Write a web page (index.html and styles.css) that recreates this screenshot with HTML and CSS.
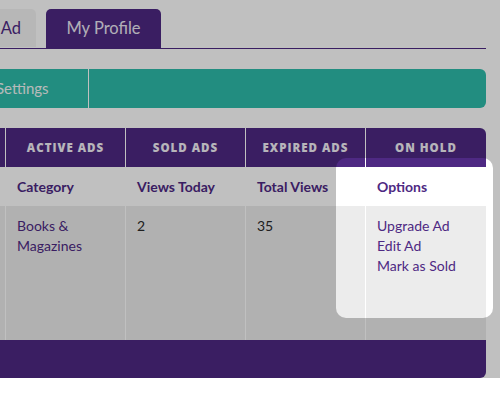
FILE: index.html
```html
<!doctype html>
<html>
  <head>
    <meta charset="utf-8">
    <title>My Profile - Ads</title>
    <link rel="stylesheet" href="styles.css">
  </head>
<body>
<div class="page">
  <div class="tabs">
    <div class="tab tab_ad">Post Ad</div>
    <div class="tab tab_active">My Profile</div>
  </div>

  <div class="subnav">
    <div class="subnav_item">Settings</div>
    <div class="subnav_rest"></div>
  </div>

  <div class="ads">
    <div class="ads_row ads_head">
      <div class="cell">ALL ADS</div>
      <div class="cell">ACTIVE ADS</div>
      <div class="cell">SOLD ADS</div>
      <div class="cell">EXPIRED ADS</div>
      <div class="cell">ON HOLD</div>
    </div>
    <div class="ads_row ads_sub">
      <div class="cell">Ad</div>
      <div class="cell">Category</div>
      <div class="cell">Views Today</div>
      <div class="cell">Total Views</div>
      <div class="cell">Options</div>
    </div>
    <div class="ads_row ads_data">
      <div class="cell"></div>
      <div class="cell">Books &amp;<br>Magazines</div>
      <div class="cell num">2</div>
      <div class="cell num">35</div>
      <div class="cell options">
        <a href="#">Upgrade Ad</a>
        <a href="#">Edit Ad</a>
        <a href="#">Mark as Sold</a>
      </div>
    </div>
    <div class="ads_foot"></div>
  </div>

  <!-- tour highlight over options column -->
  <div class="spotlight"></div>
</div>
</body>
</html>
```

FILE: styles.css
```css
html, body {
  margin: 0px;
  background: #ffffff;
  font-family: 'Lato', 'Open Sans', sans-serif;
  overflow: hidden;
}

.page {
  position: relative;
  width: 600px;
  margin-left: -114px;
  padding-top: 9px;
}

/* tabs */
.tabs {
  display: flex;
  gap: 10px;
  padding-left: 54px;
  border-bottom: 1px solid #4e2983;
}

.tab {
  height: 39px;
  line-height: 38px;
  font-size: 16.5px;
  border-radius: 5px 5px 0 0;
  box-sizing: border-box;
}

.tab_ad {
  width: 96px;
  height: 38px;
  text-align: right;
  padding-right: 15px;
  background: #f4f4f4;
  color: #4e2983;
}

.tab_active {
  width: 115px;
  text-align: center;
  background: #4e2983;
  color: #ece8f4;
}

/* teal sub navigation */
.subnav {
  display: flex;
  height: 39px;
  margin-top: 20px;
  background: #2ebcaa;
  border-radius: 0 6px 6px 0;
}

.subnav_item {
  width: 203px;
  padding-left: 110px;
  box-sizing: border-box;
  border-right: 1px solid #ffffff;
  color: #f2f8f7;
  font-size: 15px;
  line-height: 39px;
}

/* ads table */
.ads {
  width: 600px;
  margin-top: 20px;
  border-radius: 0 6px 6px 0;
  overflow: hidden;
}

.ads_row {
  display: grid;
  grid-template-columns: repeat(5, 120px);
}

.ads_head {
  background: #4e2983;
  height: 39px;
}

.ads_head .cell {
  border-right: 1px solid #ffffff;
  color: #f4f1f8;
  font-family: 'Open Sans', sans-serif;
  font-weight: 800;
  font-size: 11.5px;
  letter-spacing: 1px;
  text-align: center;
  line-height: 39px;
}

.ads_head .cell:last-child { border-right: none; }

.ads_sub {
  height: 39px;
  background: #ffffff;
}

.ads_sub .cell {
  padding-left: 11px;
  font-weight: 700;
  font-size: 14px;
  line-height: 39px;
  color: #4e2983;
}

.ads_data {
  height: 134px;
  background: #ececec;
}

.ads_data .cell {
  border-right: 1px solid #ffffff;
  padding: 10px 0 0 11px;
  font-size: 14px;
  line-height: 20px;
  color: #4e2983;
}

.ads_data .cell:last-child { border-right: none; }
.ads_data .num { color: #2a2a2a; }

.options a {
  display: block;
  text-decoration: none;
  color: #4e2983;
}

.ads_foot {
  height: 38px;
  background: #4e2983;
}

.spotlight {
  position: absolute;
  left: 450px;
  top: 158px;
  width: 157px;
  height: 160px;
  border-radius: 10px;
  box-shadow: 0 0 0 2000px rgba(0, 0, 0, 0.247);
}
```
